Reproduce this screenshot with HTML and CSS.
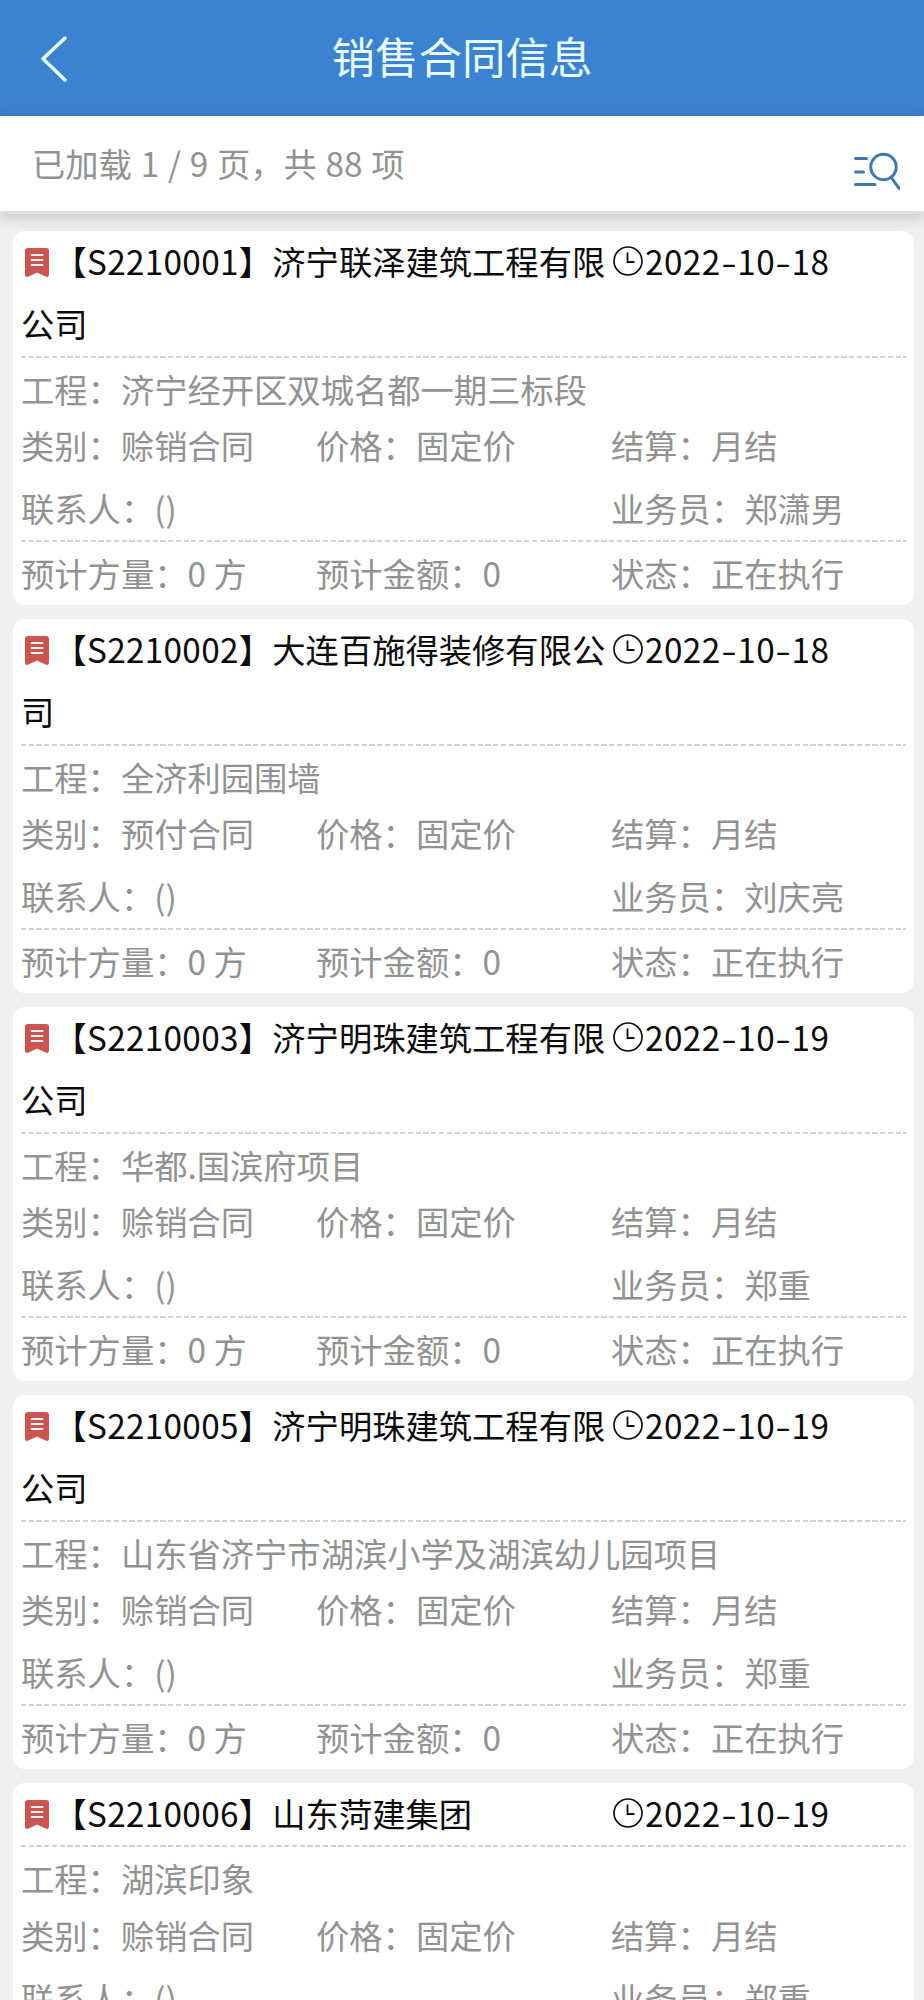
FILE: index.html
```
<!DOCTYPE html>
<html lang="zh-CN">
<head>
<meta charset="utf-8">
<title>销售合同信息</title>
<link rel="stylesheet" href="styles.css">
</head>
<body>
<svg class="defs" aria-hidden="true">
  <symbol id="bookmark" viewBox="0 0 24 29"><path fill="#cc5350" d="M3 0h18q3 0 3 3v23q0 4-3.500 2.500L12 24.500l-8.500 4Q0 30 0 26V3Q0 0 3 0z"/><path stroke="#fff4f2" stroke-width="2" stroke-linecap="round" d="M6.500 7h11M6.500 12h11M6.500 17h11"/></symbol>
  <symbol id="clock" viewBox="0 0 30 30"><circle cx="15" cy="15" r="14" fill="none" stroke="#111" stroke-width="1.700"/><path fill="none" stroke="#111" stroke-width="1.800" d="M14.500 6.500v9.500h7"/></symbol>
</svg>
<header class="header">
  <svg class="back" viewBox="0 0 26 46"><path d="M24 2L2 22.700 24 44"/></svg>
  <h1 class="heading">销售合同信息</h1>
</header>
<div class="summary">
  <span class="count">已加载 1 / 9 页，共 88 项</span>
  <svg class="filter" viewBox="0 0 48 40"><path d="M3.500 7.500h11M3.500 21h8M3.500 33.500H23M39 26l8 11.500"/><circle cx="31.500" cy="16" r="12.700"/></svg>
</div>
<main class="list" id="list"></main>
<script src="app.js"></script>
</body>
</html>
```
FILE: styles.css
```
* { box-sizing: border-box; }
body {
  margin: 0;
  height: 2000px;
  overflow: hidden;
  background: #f0f0f0;
  color: #929292;
  font-family: "Noto Sans CJK SC", sans-serif;
  font-size: 33.3px;
  font-weight: 400;
}
.defs { display: none; }
.header {
  display: grid;
  grid-template-columns: 120px 1fr 120px;
  align-items: center;
  height: 116px;
  background: #3c82d2;
  border-bottom: 1px solid #3f7fbd;
}
.back {
  width: 26px;
  height: 46px;
  margin: 2px 0 0 41px;
  fill: none;
  stroke: #e6ffff;
  stroke-width: 3.4;
  stroke-linecap: round;
  stroke-linejoin: round;
}
.heading {
  margin: 0;
  color: #e8ffff;
  font-size: 43.5px;
  font-weight: 400;
  line-height: 60px;
  text-align: center;
  padding-bottom: 3px;
}
.summary {
  display: flex;
  justify-content: space-between;
  height: 98px;
  padding: 0 24px 0 32px;
  background: #fff;
  border-bottom: 3px solid #e0e0e0;
  box-shadow: 0 3px 14px rgba(0, 0, 0, .2);
}
.count { line-height: 94px; white-space: pre; word-spacing: 1.3px; }
.filter {
  width: 48px;
  height: 40px;
  margin-top: 35px;
  fill: none;
  stroke: #3d78b5;
  stroke-width: 3;
  stroke-linecap: round;
}
.list {
  display: flex;
  flex-direction: column;
  gap: 14px;
  padding: 17px 10px 0 13px;
}
.card {
  flex: none;
  padding: 0 8px;
  border-radius: 12px;
  background: #fff;
}
.top {
  display: grid;
  grid-template-columns: 591px 1fr;
  color: #0c0c0c;
  line-height: 62.33px;
}
.name { margin-top: -1px; padding-bottom: 1px; word-break: break-all; }
.bookmark {
  width: 24px;
  height: 29px;
  margin: 0 4.500px 0 4px;
  vertical-align: -2px;
}
.code { letter-spacing: .3px; }
.date { display: flex; align-items: flex-start; margin-top: -1px; }
.clock { width: 30px; height: 30px; margin: 16px 2px 0 1px; }
.day { letter-spacing: .45px; }
.dash {
  display: inline-block;
  width: 16.5px;
  text-align: center;
  transform: scaleX(1.35);
}
.rule {
  height: 2px;
  background: repeating-linear-gradient(90deg, #d2d2d2 0 5.200px, #fff 5.200px 7.740px);
}
.row {
  display: grid;
  grid-template-columns: 295px 295px 1fr;
  line-height: 61px;
  padding-bottom: 2px;
  white-space: pre;
}
.project { display: block; padding-bottom: 1.33px; }
.terms { line-height: 49px; padding-bottom: 0; }
.people { padding: 8px 0 2px; }
```
FILE: app.js
```
const contracts = [
  ["S2210001", "济宁联泽建筑工程有限公司", "2022-10-18", "济宁经开区双城名都一期三标段", "赊销合同", "郑潇男"],
  ["S2210002", "大连百施得装修有限公司", "2022-10-18", "全济利园围墙", "预付合同", "刘庆亮"],
  ["S2210003", "济宁明珠建筑工程有限公司", "2022-10-19", "华都.国滨府项目", "赊销合同", "郑重"],
  ["S2210005", "济宁明珠建筑工程有限公司", "2022-10-19", "山东省济宁市湖滨小学及湖滨幼儿园项目", "赊销合同", "郑重"],
  ["S2210006", "山东菏建集团", "2022-10-19", "湖滨印象", "赊销合同", "郑重"]
];

document.getElementById("list").innerHTML = contracts.map(([code, name, date, project, type, seller]) => `
<article class="card">
  <div class="top">
    <div class="name"><svg class="bookmark"><use href="#bookmark"/></svg><span class="code">【${code}】</span>${name}</div>
    <div class="date"><svg class="clock"><use href="#clock"/></svg><span class="day">${date.replace(/-/g, '<span class="dash">-</span>')}</span></div>
  </div>
  <div class="rule"></div>
  <div class="row project">工程：${project}</div>
  <div class="row terms"><span>类别：${type}</span><span>价格：固定价</span><span>结算：月结</span></div>
  <div class="row people"><span>联系人：()</span><span></span><span>业务员：${seller}</span></div>
  <div class="rule"></div>
  <div class="row totals"><span>预计方量：0 方</span><span>预计金额：0</span><span>状态：正在执行</span></div>
</article>`).join("");
```
